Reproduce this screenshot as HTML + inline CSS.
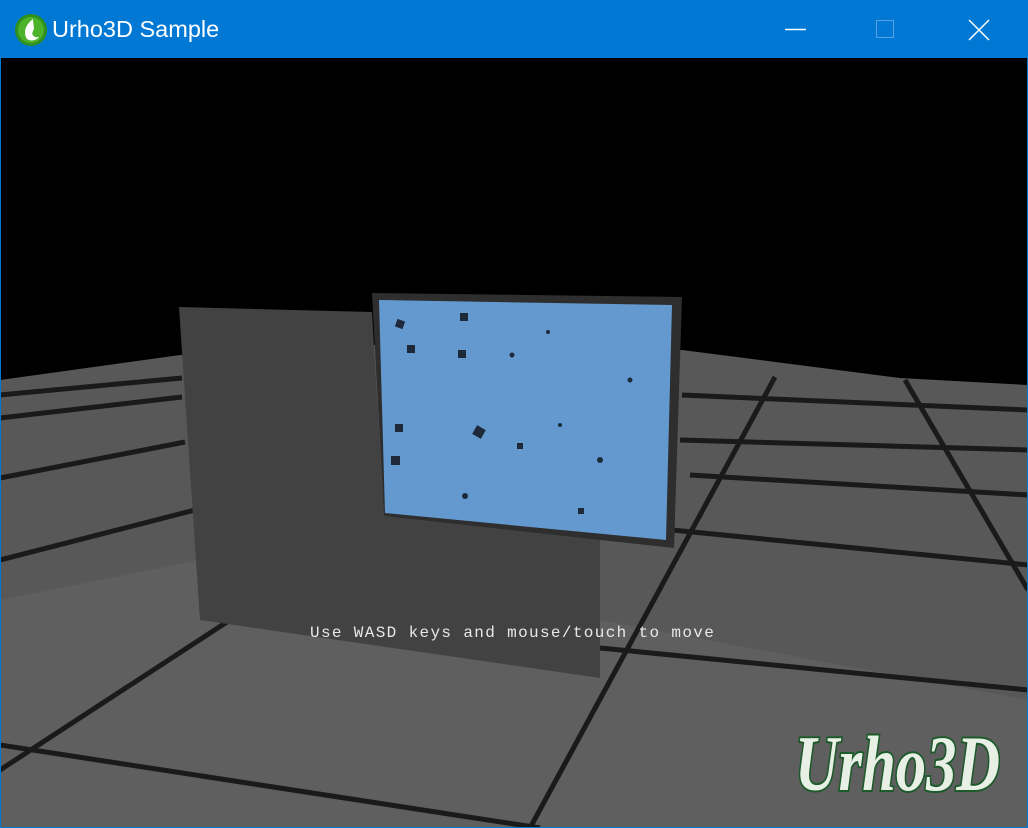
<!DOCTYPE html>
<html><head><meta charset="utf-8"><style>
html,body{margin:0;padding:0;width:1028px;height:828px;overflow:hidden;background:#0078d4;}
.tb{position:absolute;left:0;top:0;width:1028px;height:58px;background:#0078d4;}
.title{position:absolute;left:52px;top:16px;color:#fff;font:23.5px "Liberation Sans",sans-serif;}
.scene{position:absolute;left:1px;top:58px;width:1026px;height:769px;background:#000;overflow:hidden;}
.msg{position:absolute;left:309px;top:566px;color:#e8e8e8;font:16px "Liberation Mono",monospace;letter-spacing:1.35px;}
</style></head><body>
<div class="tb">
<svg width="40" height="40" style="position:absolute;left:13px;top:11px" viewBox="0 0 40 40">
<circle cx="18" cy="19" r="16" fill="#2f8f1f"/><circle cx="18" cy="19" r="13" fill="#4cb32a"/>
<path d="M20 8 C12 14 10 22 14 28 C18 31 24 29 26 26 C21 27 18 24 20 20 C22 18 20 13 20 8Z" fill="#fff"/>
</svg>
<div class="title">Urho3D Sample</div>
<svg width="1028" height="58" style="position:absolute;left:0;top:0">
<line x1="785" y1="29.5" x2="806" y2="29.5" stroke="#fff" stroke-width="1.5"/>
<rect x="876.5" y="20.5" width="17" height="17" fill="none" stroke="#5aa2e6" stroke-width="1"/>
<path d="M969 20 L989 40 M989 20 L969 40" stroke="#fff" stroke-width="1.5"/>
</svg>
</div>
<div class="scene">
<svg width="1026" height="769" viewBox="1 58 1026 769" style="position:absolute;left:0;top:0">
<polygon points="0,380 180,355 372,345 682,350 900,378 1028,385 1028,828 0,828" fill="#585858"/>
<polygon points="0,600 200,560 600,620 1028,700 1028,828 0,828" fill="#666" opacity="0.5"/>
<g stroke="#1a1a1a" stroke-width="5" fill="none">
<line x1="530" y1="828" x2="775" y2="377"/>
<line x1="905" y1="380" x2="1028" y2="590"/>
<line x1="0" y1="745" x2="540" y2="828"/>
<line x1="0" y1="770" x2="230" y2="620"/>
<line x1="0" y1="560" x2="195" y2="510"/>
<line x1="0" y1="478" x2="185" y2="442"/>
<line x1="0" y1="418" x2="182" y2="397"/>
<line x1="0" y1="395" x2="182" y2="378"/>
<line x1="680" y1="440" x2="1028" y2="450"/>
<line x1="690" y1="475" x2="1028" y2="495"/>
<line x1="672" y1="530" x2="1028" y2="565"/>
<line x1="600" y1="648" x2="1028" y2="690"/>
<line x1="682" y1="395" x2="1028" y2="410"/>
</g>
<polygon points="179,307 372,312 384,516 600,540 600,678 200,620" fill="#424242"/>
<polygon points="372,293 682,297 674,548 600,540 384,516" fill="#2e2e2e"/>
<polygon points="379,300 672,305 666,540 385,513" fill="#6499cf"/>
<g fill="#1e2a3a">
<rect x="396" y="320" width="8" height="8" transform="rotate(20 400 324)"/>
<rect x="460" y="313" width="8" height="8"/>
<rect x="407" y="345" width="8" height="8"/>
<rect x="458" y="350" width="8" height="8"/>
<rect x="474" y="427" width="10" height="10" transform="rotate(30 479 432)"/>
<rect x="391" y="456" width="9" height="9"/>
<rect x="395" y="424" width="8" height="8"/>
<rect x="517" y="443" width="6" height="6"/>
<rect x="578" y="508" width="6" height="6"/>
<circle cx="548" cy="332" r="2"/><circle cx="512" cy="355" r="2.5"/><circle cx="600" cy="460" r="3"/>
<circle cx="630" cy="380" r="2.5"/><circle cx="465" cy="496" r="3"/><circle cx="560" cy="425" r="2"/>
</g>
<g font-family="Liberation Serif,serif" font-weight="bold" font-style="italic" font-size="78" fill="#e8f0e6" stroke="#1d5a2a" stroke-width="4" paint-order="stroke">
<text x="795" y="790" textLength="205" lengthAdjust="spacingAndGlyphs">Urho3D</text>
</g>
</svg>
<div class="msg">Use WASD keys and mouse/touch to move</div>
</div>
</body></html>
